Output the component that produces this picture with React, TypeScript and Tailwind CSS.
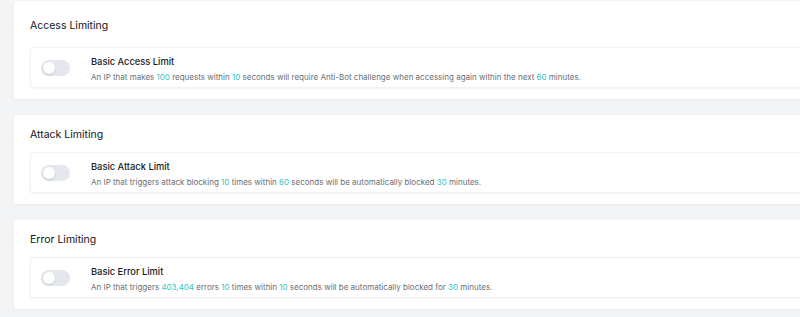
import React from "react";

type Part = string | { n: string };

interface LimitCard {
  heading: string;
  title: string;
  parts: Part[];
  first?: boolean;
}

const cards: LimitCard[] = [
  {
    heading: "Access Limiting",
    title: "Basic Access Limit",
    parts: [
      "An IP that makes ",
      { n: "100" },
      " requests within ",
      { n: "10" },
      " seconds will require Anti-Bot challenge when accessing again within the next ",
      { n: "60" },
      " minutes.",
    ],
    first: true,
  },
  {
    heading: "Attack Limiting",
    title: "Basic Attack Limit",
    parts: [
      "An IP that triggers attack blocking ",
      { n: "10" },
      " times within ",
      { n: "60" },
      " seconds will be automatically blocked ",
      { n: "30" },
      " minutes.",
    ],
  },
  {
    heading: "Error Limiting",
    title: "Basic Error Limit",
    parts: [
      "An IP that triggers ",
      { n: "403,404" },
      " errors ",
      { n: "10" },
      " times within ",
      { n: "10" },
      " seconds will be automatically blocked for ",
      { n: "30" },
      " minutes.",
    ],
  },
];

function Toggle() {
  return (
    <div className="w-[29px] h-[16px] rounded-full bg-[#e4e7ec] flex items-center px-[2px] shrink-0">
      <div className="w-[12px] h-[12px] rounded-full bg-white shadow-[0_1px_2px_rgba(0,0,0,0.15)]" />
    </div>
  );
}

export default function App() {
  return (
    <div
      className="w-[800px] h-[317px] overflow-hidden bg-[#f3f4f6] pl-[14px] pt-[1px]"
      style={{ fontFamily: "Inter, 'Noto Sans', sans-serif" }}
    >
      <div className="w-[830px] flex flex-col gap-[16px]">
        {cards.map((card, index) => (
          <div
            key={index}
            className={
              "bg-white rounded-[3px] shadow-[0_1px_3px_rgba(0,0,0,0.04)] px-[16px] pb-[11px] " +
              (card.first ? "pt-[18px]" : "pt-[13px]")
            }
          >
            <h2
              className={
                "text-[10.5px] leading-[14px] text-[#141414] " +
                (card.first ? "mb-[14px]" : "mb-[10px]")
              }
            >
              {card.heading}
            </h2>
            <div className="flex items-center h-[41px] bg-white rounded-[3px] border border-[#f1f2f4] shadow-[0_1px_3px_rgba(0,0,0,0.05)] pl-[10px]">
              <Toggle />
              <div className="ml-[21px] pt-[3px] flex flex-col gap-[3px]">
                <p className="text-[9.3px] leading-[12px] font-medium text-[#1a1a1a]">
                  {card.title}
                </p>
                <p className="text-[8px] leading-[12px] text-[#6b6f75]">
                  {card.parts.map((part, i) =>
                    typeof part === "string" ? (
                      <span key={i}>{part}</span>
                    ) : (
                      <span key={i} className="text-[#33c6c6]">
                        {part.n}
                      </span>
                    )
                  )}
                </p>
              </div>
            </div>
          </div>
        ))}
      </div>
    </div>
  );
}
